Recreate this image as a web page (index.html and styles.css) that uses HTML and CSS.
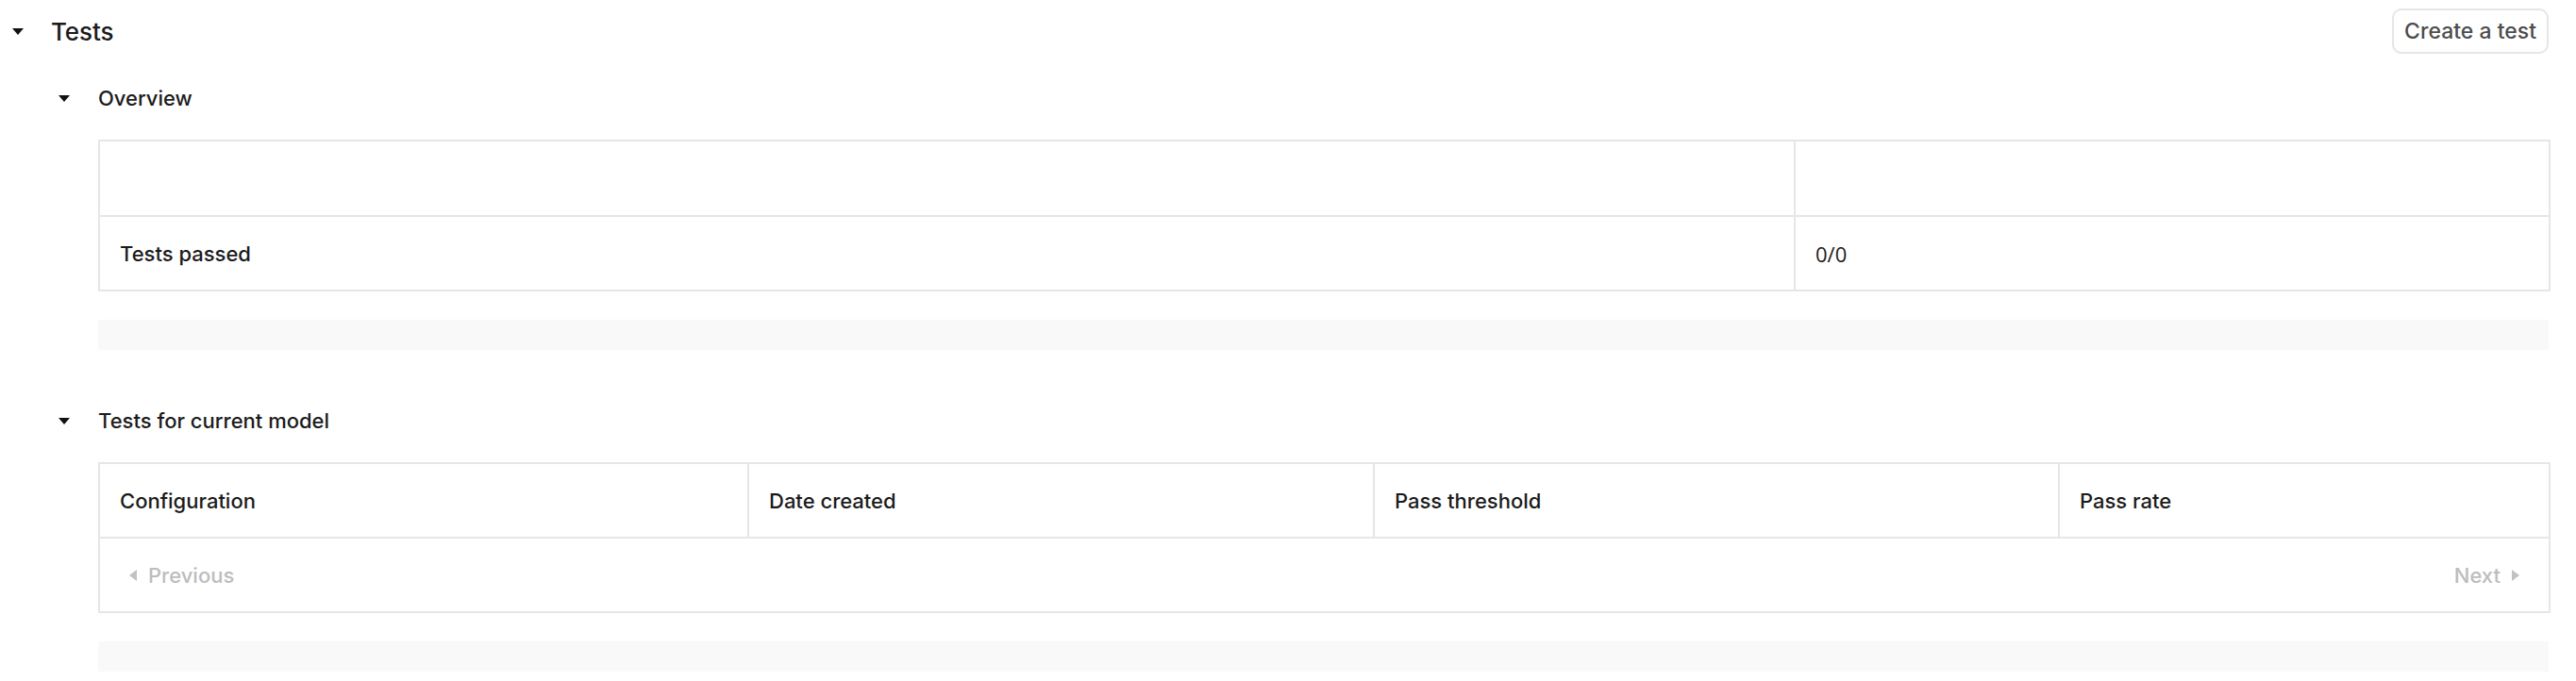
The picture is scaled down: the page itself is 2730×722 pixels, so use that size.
FILE: index.html
```html
<!DOCTYPE html>
<html lang="en">
<head>
<meta charset="utf-8">
<title>Tests</title>
<link rel="stylesheet" href="styles.css">
</head>
<body>
<div class="page">
  <div class="header">
    <div class="title">
      <svg class="caret" width="12" height="7" viewBox="0 0 12 7"><polygon points="0,0 12,0 6,7" fill="#111"/></svg>
      <span class="title-text">Tests</span>
    </div>
    <button class="btn">Create a test</button>
  </div>

  <section class="section first">
    <div class="heading">
      <svg class="caret" width="12" height="7" viewBox="0 0 12 7"><polygon points="0,0 12,0 6,7" fill="#111"/></svg>
      <span class="heading-text">Overview</span>
    </div>
    <div class="content">
      <table class="grid">
        <colgroup><col class="ov1"><col class="ov2"></colgroup>
        <tr class="row-empty"><td></td><td></td></tr>
        <tr><td>Tests passed</td><td class="num">0/0</td></tr>
      </table>
      <div class="bar"></div>
    </div>
  </section>

  <section class="section second">
    <div class="heading">
      <svg class="caret" width="12" height="7" viewBox="0 0 12 7"><polygon points="0,0 12,0 6,7" fill="#111"/></svg>
      <span class="heading-text">Tests for current model</span>
    </div>
    <div class="content">
      <table class="grid">
        <colgroup><col class="t1"><col class="t2"><col class="t3"><col class="t4"></colgroup>
        <tr><th>Configuration</th><th>Date created</th><th>Pass threshold</th><th>Pass rate</th></tr>
        <tr><td colspan="4" class="pager-cell">
          <div class="pager">
            <span class="pg prev"><svg width="8" height="12" viewBox="0 0 8 12"><polygon points="8,0 8,12 0,6" fill="#c2c2c2"/></svg>Previous</span>
            <span class="pg next">Next<svg width="8" height="12" viewBox="0 0 8 12"><polygon points="0,0 0,12 8,6" fill="#c2c2c2"/></svg></span>
          </div>
        </td></tr>
      </table>
      <div class="bar"></div>
    </div>
  </section>
</div>
</body>
</html>
```

FILE: styles.css
```css
* { box-sizing: border-box; }
html, body { margin: 0; padding: 0; background: #fff; }
body {
  font-family: Inter, "Noto Sans", sans-serif;
  color: #1b1b1b;
  font-weight: 500;
}
.page {
  padding: 9px 29px 10px 13px;
}
.header {
  display: flex;
  align-items: center;
  justify-content: space-between;
  height: 48px;
}
.title {
  display: flex;
  align-items: center;
  gap: 29px;
}
.caret { display: block; flex: none; }
.title-text {
  font-size: 26px;
  font-weight: 500;
  letter-spacing: -0.1px;
}
.btn {
  height: 48px;
  padding: 0 11px;
  border: 2px solid #e6e6e6;
  border-radius: 10px;
  background: #fff;
  font-family: Inter, "Noto Sans", sans-serif;
  font-size: 23px;
  font-weight: 500;
  color: #4d4d4d;
}
.section { margin-left: 49px; }
.section.first { margin-top: 27px; }
.section.second { margin-top: 55px; }
.heading {
  display: flex;
  align-items: center;
  gap: 30px;
  height: 40px;
}
.heading-text { font-size: 22px; font-weight: 500; }
.content {
  margin-left: 42px;
  margin-top: 24px;
}
.grid {
  width: 100%;
  border-collapse: collapse;
  table-layout: fixed;
  border: 2px solid #e6e6e6;
}
.grid td, .grid th {
  border: 2px solid #e6e6e6;
  height: 79px;
  padding: 0 0 0 21px;
  text-align: left;
  font-size: 22px;
  font-weight: 500;
  color: #1b1b1b;
}
.row-empty td { height: 80px; }
.ov1 { width: 1797px; }
.ov2 { width: 800px; }
.t1 { width: 688px; }
.t2 { width: 663px; }
.t3 { width: 726px; }
.t4 { width: 520px; }
.num {
  font-family: "Open Sans", "Noto Sans", sans-serif;
  font-weight: 400;
  color: #222;
}
.grid td.pager-cell { padding: 0 31px; }
.pager {
  display: flex;
  justify-content: space-between;
  align-items: center;
}
.pg {
  display: flex;
  align-items: center;
  gap: 12px;
  color: #bdbdbd;
  font-size: 22px;
  font-weight: 500;
}
.pg svg { display: block; }
.bar {
  margin-top: 30px;
  height: 32px;
  background: #f9f9f9;
}
```
